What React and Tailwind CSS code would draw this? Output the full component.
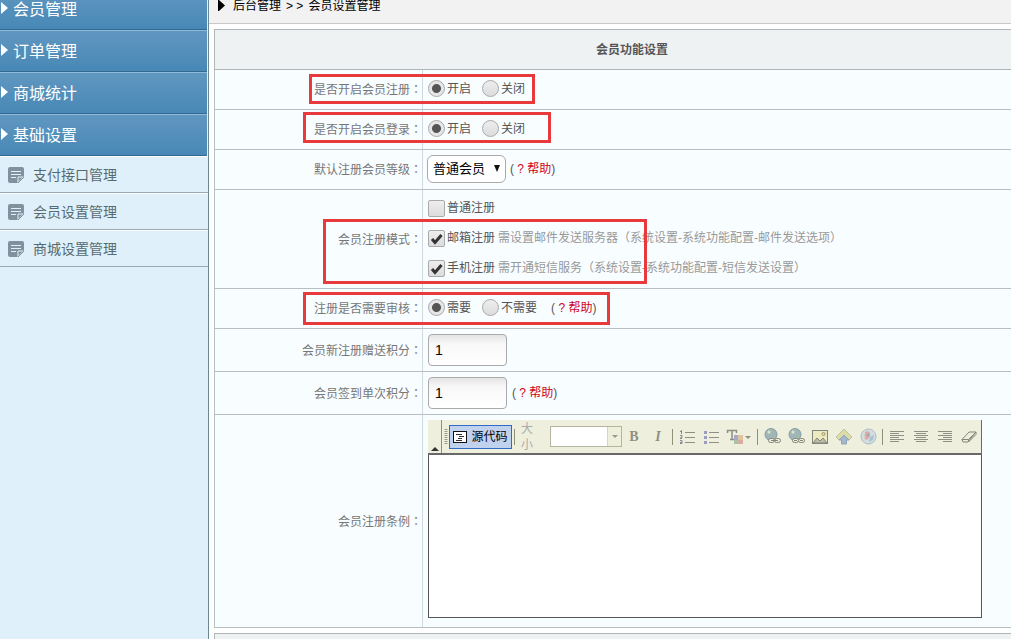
const menus = ['会员管理', '订单管理', '商城统计', '基础设置'];
const subMenus = ['支付接口管理', '会员设置管理', '商城设置管理'];

function NoteIcon() {
  return (
    <svg width="16" height="16" viewBox="0 0 16 16" className="shrink-0">
      <path d="M2 0h12a2 2 0 0 1 2 2v8l-6 6H2a2 2 0 0 1-2-2V2a2 2 0 0 1 2-2z" fill="#82919e" />
      <path d="M3 4.5h10M3 7.5h10M3 10.5h5" stroke="#e0f0fb" strokeWidth="1" />
      <path d="M10 15.500v-5.500h5.500z" fill="#82919e" stroke="#e0f0fb" />
      <path d="M10 16l6-6" stroke="#82919e" />
    </svg>
  );
}

function Sidebar() {
  return (
    <aside className="w-[209px] shrink-0 border-r border-[#6b8890] bg-[#e0f0fb]">
      <nav className="-mt-3">
        {menus.map((name) => (
          <button
            key={name}
            className="mr-px flex h-[42px] w-[207px] items-center gap-[5px] border-t border-b border-t-[#8fbbdb] border-b-[#34688f] bg-gradient-to-b from-[#6097c0] to-[#4888b6] pt-0.5 text-base text-white"
          >
            <svg width="8" height="12" viewBox="0 0 8 12" className="-mt-1">
              <path d="M1 0l7 6-7 6z" fill="#fff" />
            </svg>
            {name}
          </button>
        ))}
        {subMenus.map((name) => (
          <a
            key={name}
            href="#"
            className="flex h-[37px] items-center gap-[9px] border-t border-b border-t-white border-b-[#98aab5] pl-2 text-sm text-[#566b70]"
          >
            <NoteIcon />
            {name}
          </a>
        ))}
      </nav>
    </aside>
  );
}

function Row({ label, height, children }) {
  return (
    <tr className={height}>
      <th scope="row" className="border border-[#b6c0c4] border-r-[#d0dadc] p-0 text-right font-normal text-[#777]">
        {label}
        <span className="font-['Noto_Sans_CJK_JP',sans-serif]">：</span>
      </th>
      <td className="border border-[#b6c0c4] border-l-[#d0dadc] p-0 pl-[5px]">{children}</td>
    </tr>
  );
}

function Radio({ name, label, checked }) {
  return (
    <label className="flex items-center gap-0.5">
      <input
        type="radio"
        name={name}
        defaultChecked={checked}
        className="size-[17px] appearance-none rounded-full border border-[#aaa] bg-gradient-to-b from-[#eee] to-[#dcdcdc] checked:bg-[radial-gradient(circle,#555_0_4px,#e6e6e6_5px)]"
      />
      {label}
    </label>
  );
}

function Check({ label, hint, checked }) {
  return (
    <div className="flex h-[30px] items-center gap-[3px]">
      <label className="flex items-center gap-0.5">
        <span className="relative size-[17px]">
          <input
            type="checkbox"
            defaultChecked={checked}
            className="peer block size-[17px] appearance-none rounded-xs border border-[#aaa] bg-gradient-to-b from-[#eee] to-[#dcdcdc]"
          />
          <svg viewBox="0 0 17 17" className="pointer-events-none absolute inset-0 hidden peer-checked:block">
            <path d="M4 9l3 3.5L13.5 5" fill="none" stroke="#333" strokeWidth="3" />
          </svg>
        </span>
        {label}
      </label>
      {hint && <span className="text-[#999]">{hint}</span>}
    </div>
  );
}

function Help() {
  return (
    <span>
      ( <a href="#" className="text-[#d0021b]">? 帮助</a>)
    </span>
  );
}

function RadioRow({ name, labels, help }) {
  return (
    <div className="-mt-0.5 flex items-center gap-[11px]">
      <Radio name={name} label={labels[0]} checked />
      <Radio name={name} label={labels[1]} />
      {help && (
        <span className="pl-[3px]">
          <Help />
        </span>
      )}
    </div>
  );
}

function Points({ id }) {
  return (
    <input
      id={id}
      defaultValue="1"
      className="h-8 w-[79px] rounded border border-[#aaa] bg-gradient-to-b from-[#e4e4e4] via-[#f8f8f8] via-30% to-white px-1.5 text-sm text-black"
    />
  );
}

function Sep() {
  return <span className="mx-0.5 h-4 w-px shrink-0 bg-[#8f9178]" />;
}

function Tool({ title, children }) {
  return (
    <button title={title} className="flex h-6 w-6 shrink-0 items-center justify-center">
      {children}
    </button>
  );
}

function Lines({ d }) {
  return (
    <svg width="16" height="16" viewBox="0 0 16 16">
      <path d={d} stroke="#8f9085" fill="none" />
    </svg>
  );
}

function Globe({ broken }) {
  return (
    <svg width="17" height="17" viewBox="0 0 17 17">
      <circle cx="7" cy="6.5" r="6" fill="#9eb5bf" stroke="#899da8" />
      <path d="M4 2l4-1 1 3-3 2-2 3-2-3zM9 7l3-1-1 4-3 1z" fill="#a6baa1" />
      <circle cx="5" cy="4" r="1.5" fill="#dce6e8" />
      <rect x="4.5" y="10.5" width="6" height="4" rx="2" fill="#eeeedd" stroke="#85867a" />
      <rect x="10.5" y="10.5" width="6" height="4" rx="2" fill="#eeeedd" stroke="#85867a" />
      {broken ? <path d="M6 12.5h3M12 12.5h3" stroke="#85867a" /> : <path d="M7 12.5h7" stroke="#85867a" />}
    </svg>
  );
}

function Toolbar() {
  return (
    <div className="flex h-[35px] items-center overflow-hidden border-r border-b-2 border-[#696969] bg-[#efefde]">
      <button title="收起" className="flex h-full w-3.5 shrink-0 items-end justify-center border-r border-[#8f9178] pb-0.5">
        <svg width="8" height="4" viewBox="0 0 8 4">
          <path d="M4 0l4 4H0z" fill="#333" />
        </svg>
      </button>
      <svg width="7" height="16" viewBox="0 0 7 16" className="shrink-0">
        <path d="M4 0v16" stroke="#999b86" strokeWidth="3" strokeDasharray="1 1" />
      </svg>
      <button className="flex h-6 w-[63px] shrink-0 items-center justify-center gap-1 border border-[#316ac5] bg-[#c1d2ee] text-black">
        <svg width="14" height="12" viewBox="0 0 14 12">
          <rect x=".5" y=".5" width="13" height="11" fill="#fff" stroke="#111" />
          <path d="M3 3.5h6M6 5.5h5M5 7.5h4M3 9.5h6" stroke="#333" />
        </svg>
        源代码
      </button>
      <Sep />
      <label htmlFor="size" className="ml-1 w-[29px] shrink-0 text-xs leading-4 text-[#aaa]">
        <span className="block w-3">大小</span>
      </label>
      <span className="relative flex h-[21px] w-[72px] shrink-0">
        <select id="size" className="w-full appearance-none border border-[#b5b59f] bg-white">
          <option></option>
        </select>
        <span className="pointer-events-none absolute inset-y-px right-px flex w-3.5 items-center justify-center border-l border-[#d5d5c0] bg-[#efefde]">
          <svg width="6" height="3" viewBox="0 0 6 3">
            <path d="M0 0h6L3 3z" fill="#999b86" />
          </svg>
        </span>
      </span>
      <Tool title="加粗">
        <b className="font-['Liberation_Serif',serif] text-sm text-[#8f9085]">B</b>
      </Tool>
      <Tool title="倾斜">
        <b className="font-['Liberation_Serif',serif] text-sm text-[#8f9085] italic">I</b>
      </Tool>
      <Sep />
      <Tool title="编号列表">
        <svg width="16" height="16" viewBox="0 0 16 16">
          <path d="M6 3.5h10M6 8.5h10M6 13.5h10" stroke="#8f9085" />
          <path d="M2.5 1v4M1 2.5h2M1 6.5h2v2H1.500M1 9.500h2M1 11.500h2v3H1M1 13.500h2" stroke="#858a95" fill="none" />
        </svg>
      </Tool>
      <Tool title="项目列表">
        <svg width="16" height="16" viewBox="0 0 16 16">
          <path d="M6 3.5h10M6 8.5h10M6 13.5h10" stroke="#8f9085" />
          <path d="M1 2h3v3H1zM1 7h3v3H1zM1 12h3v3H1z" fill="#9a9cc4" />
        </svg>
      </Tool>
      <button title="文本颜色" className="flex h-6 w-8 shrink-0 items-center justify-center">
        <svg width="26" height="18" viewBox="0 0 26 18">
          <path d="M1.500 5V2.500h9V5M6 2.500v9M4 11.500h4" stroke="#8f9085" strokeWidth="1.500" fill="none" />
          <path d="M8 7h5v5H8z" fill="#a7a9c8" />
          <path d="M12 7h5v5h-5z" fill="#e2c49a" />
          <path d="M8 12h4v4H8z" fill="#a8c3a5" />
          <path d="M12 12h5v4h-5z" fill="#d9a9a2" />
          <path d="M19 8h6l-3 3z" fill="#8f9085" />
        </svg>
      </button>
      <Sep />
      <Tool title="插入链接">
        <Globe />
      </Tool>
      <Tool title="取消链接">
        <Globe broken />
      </Tool>
      <Tool title="图像">
        <svg width="16" height="16" viewBox="0 0 16 16">
          <rect x=".5" y="1.500" width="15" height="13" fill="#eeeabf" stroke="#85867a" />
          <path d="M1 14l4-5 3 3 3-3 4 5z" fill="#b8bda8" stroke="#85867a" />
          <circle cx="11.500" cy="5" r="1.500" fill="#f2e38b" stroke="#98967a" />
        </svg>
      </Tool>
      <Tool title="上传">
        <svg width="16" height="16" viewBox="0 0 16 16">
          <path d="M8 0l8 8-3 3-5-4-5 4-3-3z" fill="#dcdcab" stroke="#c2c29a" />
          <path d="M8 6l5 5h-2.500v4h-5v-4H3z" fill="#a3b8c9" stroke="#8fa5b8" />
        </svg>
      </Tool>
      <Tool title="Flash">
        <svg width="17" height="17" viewBox="0 0 17 17">
          <circle cx="8.500" cy="8.500" r="7.500" fill="#d2dedf" stroke="#a9bcc6" />
          <path d="M5 4c4-2 6 1 5 4s-4 5-5 3 0-4 0-7z" fill="#dfaaa2" />
          <path d="M10 9l4-2-1 5-4 2z" fill="#a6c1d6" />
          <circle cx="8" cy="7" r="1.500" fill="#99a9c2" />
        </svg>
      </Tool>
      <Sep />
      <Tool title="左对齐">
        <Lines d="M1 2.500h14M1 4.500h9M1 6.500h14M1 8.500h9M1 10.500h14M1 12.500h9" />
      </Tool>
      <Tool title="居中">
        <Lines d="M1 2.500h14M3 4.500h10M1 6.500h14M3 8.500h10M1 10.500h14M3 12.500h10" />
      </Tool>
      <Tool title="右对齐">
        <Lines d="M1 2.500h14M6 4.500h9M1 6.500h14M6 8.500h9M1 10.500h14M6 12.500h9" />
      </Tool>
      <Tool title="清除格式">
        <svg width="16" height="16" viewBox="0 0 16 16">
          <path d="M1 10.500L8 3h7l-7 8.500-1 1.500H2zM1 10.500h6.500L15 3v2.500L7.500 13v-2.500" fill="#eeeedd" stroke="#85867a" />
        </svg>
      </Tool>
    </div>
  );
}

function SettingsTable() {
  return (
    <table className="w-full table-fixed border-collapse bg-[#f8fdff]">
      <colgroup>
        <col className="w-[208px]" />
        <col />
      </colgroup>
      <thead>
        <tr className="h-10">
          <th colSpan={2} className="border border-[#b0b5b7] bg-[#eef2f3] p-0 text-center font-bold text-[#555]">
            会员功能设置
          </th>
        </tr>
      </thead>
      <tbody>
        <Row label="是否开启会员注册" height="h-10">
          <RadioRow name="register" labels={['开启', '关闭']} />
        </Row>
        <Row label="是否开启会员登录" height="h-10">
          <RadioRow name="login" labels={['开启', '关闭']} />
        </Row>
        <Row label={<label htmlFor="level">默认注册会员等级</label>} height="h-10">
          <div className="-mt-0.5 -ml-px flex items-center gap-1">
            <span className="relative">
              <select id="level" className="h-7 w-[79px] appearance-none rounded-md border border-[#aaa] bg-white pl-[5px] text-[13px] text-black">
                <option>普通会员</option>
              </select>
              <svg width="6" height="7" viewBox="0 0 6 7" className="pointer-events-none absolute top-2.5 right-1.5">
                <path d="M0 0h6L3 7z" fill="#111" />
              </svg>
            </span>
            <Help />
          </div>
        </Row>
        <Row label="会员注册模式" height="h-[99px]">
          <div className="-mt-0.5">
            <Check label="普通注册" />
            <Check label="邮箱注册" hint="需设置邮件发送服务器（系统设置-系统功能配置-邮件发送选项）" checked />
            <Check label="手机注册" hint="需开通短信服务（系统设置-系统功能配置-短信发送设置）" checked />
          </div>
        </Row>
        <Row label="注册是否需要审核" height="h-10">
          <RadioRow name="audit" labels={['需要', '不需要']} help />
        </Row>
        <Row label={<label htmlFor="new-points">会员新注册赠送积分</label>} height="h-[43px]">
          <Points id="new-points" />
        </Row>
        <Row label={<label htmlFor="sign-points">会员签到单次积分</label>} height="h-[43px]">
          <div className="flex items-center gap-[5px]">
            <Points id="sign-points" />
            <Help />
          </div>
        </Row>
        <Row label={<label htmlFor="terms">会员注册条例</label>} height="h-[213px]">
          <div className="mr-[67px] -mt-1">
            <Toolbar />
            <textarea id="terms" className="block h-[163px] w-full resize-none border border-t-0 border-[#555] bg-white" />
          </div>
        </Row>
      </tbody>
    </table>
  );
}

export default function App() {
  return (
    <div className="flex h-screen overflow-hidden bg-white font-['Liberation_Sans','Noto_Sans_CJK_SC',sans-serif] text-xs leading-4 text-[#555]">
      <Sidebar />
      <main className="min-w-0 flex-1">
        <header className="flex h-6 items-start gap-2 border-b border-[#c8c8c8] bg-[#f2f2f2] pl-[9px] text-black">
          <svg width="7" height="12" viewBox="0 0 7 12">
            <path d="M0 0h1l6 5.500L1 11H0z" fill="#000" />
          </svg>
          <nav className="-mt-0.5 flex gap-[5px]">
            <span>后台管理</span>
            <span>&gt; &gt;</span>
            <span>会员设置管理</span>
          </nav>
        </header>
        <div className="relative -mr-[39px] pt-[5px] pl-[5px]">
          <SettingsTable />
          <div className="mt-[5px] h-10 border border-[#b0b5b7] bg-[#eef2f3]" />
          {/* Highlight frames round the important options */}
          <div className="pointer-events-none absolute top-[50px] left-[100px] h-[30px] w-[226px] border-3 border-[#e8393c]" />
          <div className="pointer-events-none absolute top-[88px] left-[94px] h-[31px] w-[248px] border-3 border-[#e8393c]" />
          <div className="pointer-events-none absolute top-[195px] left-[114px] h-[65px] w-[324px] border-3 border-[#e8393c]" />
          <div className="pointer-events-none absolute top-[268px] left-[94px] h-[33px] w-[307px] border-3 border-[#e8393c]" />
        </div>
      </main>
    </div>
  );
}
